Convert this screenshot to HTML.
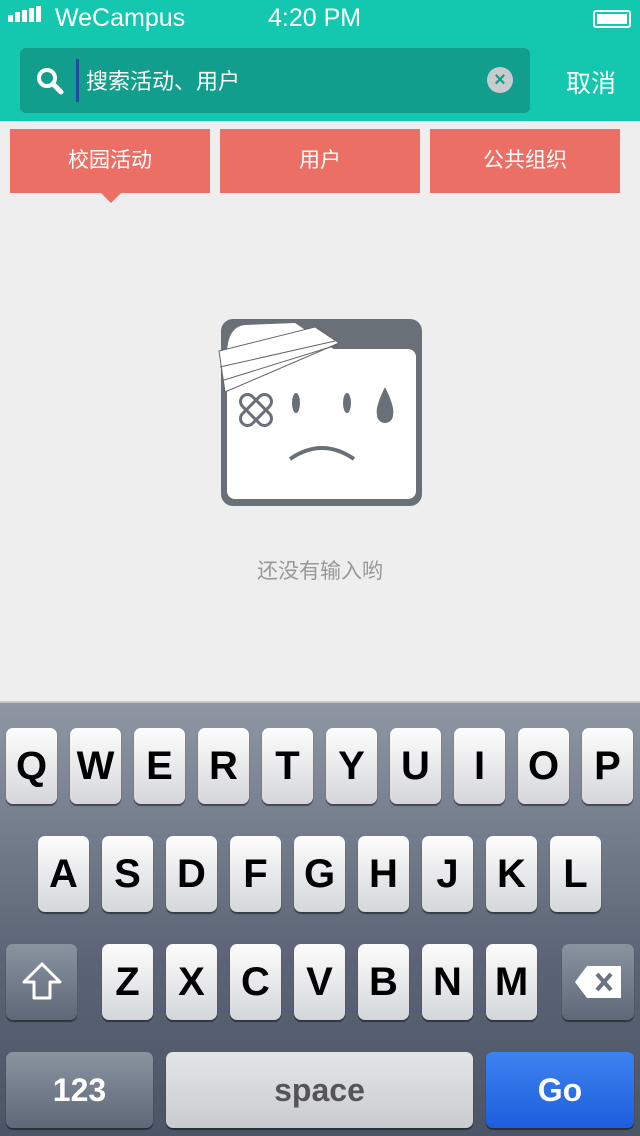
<!DOCTYPE html>
<html><head><meta charset="utf-8"><style>
*{margin:0;padding:0;box-sizing:border-box}
body{width:640px;height:1136px;overflow:hidden;background:#eeeeee;font-family:"Liberation Sans","Noto Sans CJK SC",sans-serif;position:relative}
.top{position:absolute;left:0;top:0;width:640px;height:121px;background:#14c8b0}
.status{position:absolute;top:4px;color:#fff;font-size:25px}
.search{position:absolute;left:20px;top:48px;width:510px;height:65px;background:#119e8c;border-radius:6px}
.tab{position:absolute;top:129px;height:64px;background:#ec6f66;color:#fff;font-size:21px;text-align:center;line-height:64px}
.kb{position:absolute;left:0;top:701px;width:640px;height:435px;background:linear-gradient(#8e96a3,#5a6474 60%,#4c5566);border-top:2px solid #c6c9cd}
.k{position:absolute;width:51px;height:76px;border-radius:7px;background:linear-gradient(#fdfdfd,#d5d6da);box-shadow:0 2px 1px rgba(0,0,0,.45);font-weight:bold;font-size:40px;text-align:center;line-height:76px;color:#000}
.d{background:linear-gradient(#8a93a0,#5f6878);color:#fff}
</style></head><body>
<div class="top"></div>
<div style="position:absolute;left:8px;top:15px;width:5px;height:7px;background:#fff"></div>
<div style="position:absolute;left:15px;top:12px;width:5px;height:10px;background:#fff"></div>
<div style="position:absolute;left:22px;top:10px;width:5px;height:12px;background:#fff"></div>
<div style="position:absolute;left:29px;top:8px;width:5px;height:14px;background:#fff"></div>
<div style="position:absolute;left:36px;top:6px;width:5px;height:16px;background:#fff"></div>
<div class="status" style="left:55px">WeCampus</div>
<div class="status" style="left:268px">4:20 PM</div>
<div style="position:absolute;left:593px;top:10px;width:38px;height:18px;border:2px solid #fff;border-radius:3px;padding:2px"><div style="background:#fff;width:100%;height:100%"></div></div>
<div class="search"></div>
<svg style="position:absolute;left:35px;top:66px" width="30" height="30"><circle cx="12" cy="12" r="8" stroke="#fff" stroke-width="4" fill="none"/><line x1="18" y1="18" x2="26" y2="26" stroke="#fff" stroke-width="5" stroke-linecap="round"/></svg>
<div style="position:absolute;left:76px;top:59px;width:3px;height:43px;background:#1f4aa0"></div>
<div style="position:absolute;left:86px;top:64px;color:#fff;font-size:22px">搜索活动、用户</div>
<div style="position:absolute;left:487px;top:67px;width:26px;height:26px;border-radius:50%;background:#c9ccce;color:#119e8c;font-size:20px;font-weight:bold;text-align:center;line-height:26px">×</div>
<div style="position:absolute;left:566px;top:64px;color:#fff;font-size:25px">取消</div>
<div class="tab" style="left:10px;width:200px">校园活动</div>
<div class="tab" style="left:220px;width:200px">用户</div>
<div class="tab" style="left:430px;width:190px">公共组织</div>
<div style="position:absolute;left:101px;top:193px;width:0;height:0;border-left:10px solid transparent;border-right:10px solid transparent;border-top:10px solid #ec6f66"></div>
<svg style="position:absolute;left:215px;top:315px" width="210" height="195" viewBox="0 0 210 195">
<rect x="6" y="4" width="201" height="187" rx="12" fill="#6a7078"/>
<rect x="12" y="34" width="189" height="150" rx="8" fill="#fff"/>
<path d="M12 40 Q12 12 30 10 L80 8 L120 35 L12 70Z" fill="#fff"/>
<path d="M4 36 L100 12 L124 28 L10 77 Z" fill="#fff" stroke="#666" stroke-width="1"/>
<path d="M5 52 L120 26 M6 66 L122 30" stroke="#666" stroke-width="1" fill="none"/>
<g stroke="#6a7078" stroke-width="3" fill="none"><rect x="22" y="88" width="38" height="14" rx="7" transform="rotate(45 41 95)"/><rect x="22" y="88" width="38" height="14" rx="7" transform="rotate(-45 41 95)"/></g>
<ellipse cx="81" cy="88" rx="4" ry="10" fill="#6a7078"/><ellipse cx="132" cy="88" rx="4" ry="10" fill="#6a7078"/>
<path d="M170 72 Q160 92 162 100 A8 8 0 0 0 178 100 Q180 92 170 72Z" fill="#6a7078"/>
<path d="M75 144 Q107 122 139 144" stroke="#6a7078" stroke-width="4" fill="none"/>
</svg>
<div style="position:absolute;left:0;width:640px;top:555px;text-align:center;color:#999;font-size:21px">还没有输入哟</div>
<div class="kb">
<div class="k" style="left:6px;top:25px">Q</div><div class="k" style="left:70px;top:25px">W</div><div class="k" style="left:134px;top:25px">E</div><div class="k" style="left:198px;top:25px">R</div><div class="k" style="left:262px;top:25px">T</div><div class="k" style="left:326px;top:25px">Y</div><div class="k" style="left:390px;top:25px">U</div><div class="k" style="left:454px;top:25px">I</div><div class="k" style="left:518px;top:25px">O</div><div class="k" style="left:582px;top:25px">P</div>
<div class="k" style="left:38px;top:133px">A</div><div class="k" style="left:102px;top:133px">S</div><div class="k" style="left:166px;top:133px">D</div><div class="k" style="left:230px;top:133px">F</div><div class="k" style="left:294px;top:133px">G</div><div class="k" style="left:358px;top:133px">H</div><div class="k" style="left:422px;top:133px">J</div><div class="k" style="left:486px;top:133px">K</div><div class="k" style="left:550px;top:133px">L</div>
<div class="k d" style="left:6px;top:241px;width:71px"><svg width="44" height="44" style="margin-top:16px" viewBox="0 0 44 44"><path d="M22 4 L40 22 L30 22 L30 38 L14 38 L14 22 L4 22Z" fill="none" stroke="#fff" stroke-width="3" stroke-linejoin="round"/></svg></div>
<div class="k" style="left:102px;top:241px">Z</div><div class="k" style="left:166px;top:241px">X</div><div class="k" style="left:230px;top:241px">C</div><div class="k" style="left:294px;top:241px">V</div><div class="k" style="left:358px;top:241px">B</div><div class="k" style="left:422px;top:241px">N</div><div class="k" style="left:486px;top:241px">M</div>
<div class="k d" style="left:562px;top:241px;width:72px"><svg width="50" height="36" style="margin-top:20px" viewBox="0 0 50 36"><path d="M14 2 L48 2 L48 34 L14 34 L2 18Z" fill="#fff"/><path d="M24 10 L38 26 M38 10 L24 26" stroke="#6a7380" stroke-width="4"/></svg></div>
<div class="k d" style="left:6px;top:349px;width:147px;font-size:32px">123</div>
<div class="k" style="left:166px;top:349px;width:307px;font-size:32px;color:#555;background:linear-gradient(#e4e5e7,#c9cbce)">space</div>
<div class="k" style="left:486px;top:349px;width:148px;font-size:32px;color:#fff;background:linear-gradient(#3e82f0,#1b5fde)">Go</div>
</div>
</body></html>
